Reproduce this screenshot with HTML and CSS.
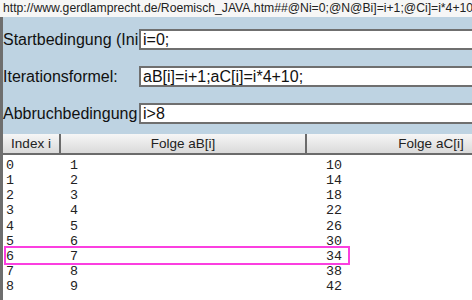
FILE: index.html
```html
<!DOCTYPE html>
<html>
  <head>
    <meta charset="utf-8">
    <title>Roemisch JAVA</title>
    <link rel="stylesheet" href="styles.css">
  </head>
  <body>
    <div class="url">http://www.gerdlamprecht.de/Roemisch_JAVA.htm##@Ni=0;@N@Bi]=i+1;@Ci]=i*4+10</div>
    <div class="page">
      <div class="form">
        <label class="label">Startbedingung (Ini</label>
        <input class="field" type="text" value="i=0;">
        <label class="label">Iterationsformel:</label>
        <input class="field" type="text" value="aB[i]=i+1;aC[i]=i*4+10;">
        <label class="label">Abbruchbedingung</label>
        <input class="field" type="text" value="i&gt;8">
      </div>
      <div class="head">
        <div class="col col-i">Index i</div>
        <div class="col col-b">Folge aB[i]</div>
        <div class="col col-c">Folge aC[i]</div>
      </div>
      <div class="out">
<pre>0	1				10
1	2				14
2	3				18
3	4				22
4	5				26
5	6				30
6	7				34
7	8				38
8	9				42</pre>
        <div class="mark"></div>
      </div>
    </div>
  </body>
</html>
```

FILE: styles.css
```css
html, body {
  margin: 0;
  height: 100%;
  overflow: hidden;
}
body {
  font-family: "Liberation Sans", Arial, sans-serif;
  background: #bed3e2;
  color: #111;
}
.url {
  height: 17px;
  line-height: 16px;
  padding-left: 3px;
  font-size: 12.2px;
  white-space: nowrap;
  background: #f6f6f6;
  color: #222;
}
.page {
  width: 700px;
  min-height: 300px;
  border-left: 3px solid #6e6e6e;
}
.form {
  display: grid;
  grid-template-columns: 136px 420px;
  row-gap: 16px;
  align-items: center;
  padding: 12px 0 10px;
}
.label {
  font-size: 16px;
  white-space: nowrap;
}
.field {
  box-sizing: border-box;
  height: 21px;
  margin: 0;
  padding: 0 2px;
  border: 2px solid #6f6f6f;
  background: #fff;
  font-family: "Liberation Sans", Arial, sans-serif;
  font-size: 16px;
  color: #111;
}
.head {
  display: flex;
  height: 19px;
  border-bottom: 2px solid #6b6b6b;
  background: linear-gradient(#f6f6f6, #dadada);
}
.col {
  box-sizing: border-box;
  border-right: 2px solid #6b6b6b;
  font-size: 13.5px;
  line-height: 19px;
  text-align: center;
  color: #222;
}
.col-i {
  width: 58px;
}
.col-b {
  width: 246px;
}
.col-c {
  width: 250px;
}
.out {
  position: relative;
  background: #fff;
  min-height: 160px;
}
.out pre {
  margin: 0;
  padding: 3px 0 0 3px;
  font-family: "Liberation Mono", "Courier New", monospace;
  font-size: 13.33px;
  line-height: 15.15px;
  color: #222;
}
.mark {
  position: absolute;
  top: 91px;
  left: 1px;
  box-sizing: border-box;
  width: 346px;
  height: 19px;
  border: 2px solid #fb3fe0;
}
```
